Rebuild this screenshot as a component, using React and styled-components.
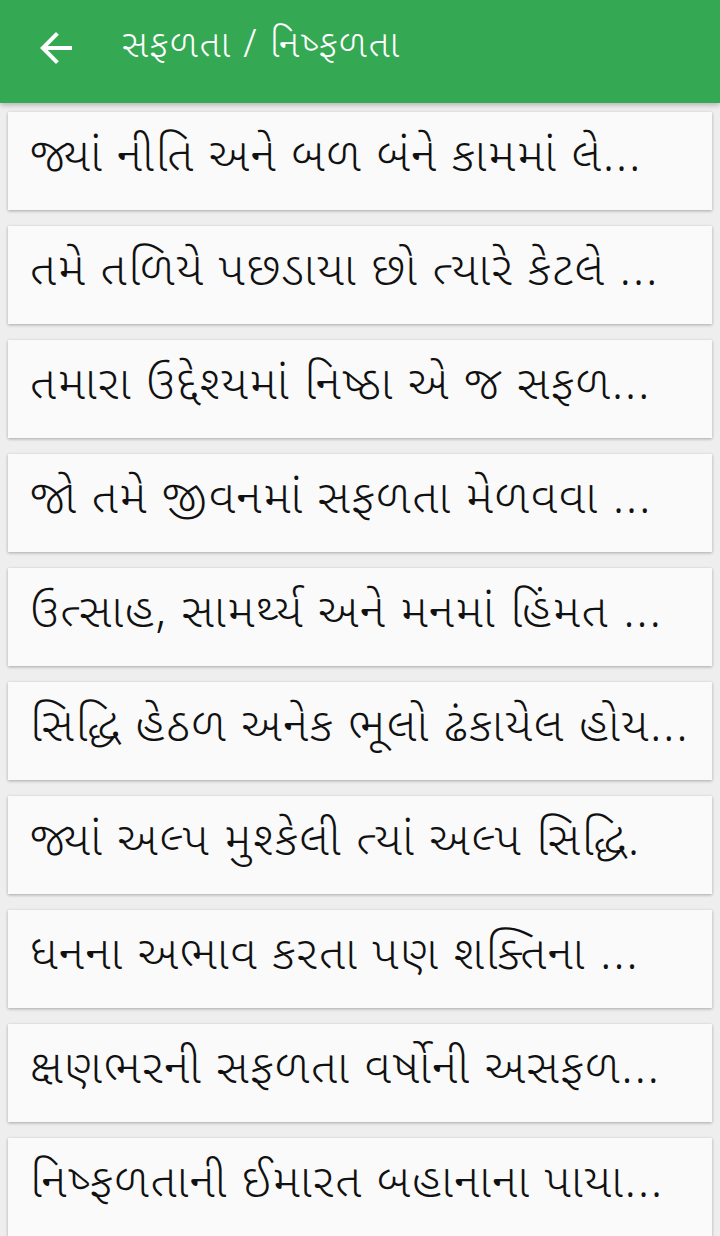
import React from 'react';
import styled, { createGlobalStyle } from 'styled-components';

const GlobalStyle = createGlobalStyle`
  html, body {
    margin: 0;
    padding: 0;
    background: #eeeeee;
    font-family: "Noto Sans Gujarati", "Noto Sans", Roboto, sans-serif;
  }
`;

const Page = styled.div`
  width: 720px;
  height: 1236px;
  overflow: hidden;
  background: #eeeeee;
`;

const Toolbar = styled.header`
  position: relative;
  z-index: 1;
  display: flex;
  align-items: center;
  height: 103px;
  padding-bottom: 8px;
  box-sizing: border-box;
  background: #35a853;
  color: #ffffff;
  box-shadow: 0 2px 5px rgba(0, 0, 0, 0.25);
`;

const BackButton = styled.button`
  display: flex;
  align-items: center;
  justify-content: center;
  width: 48px;
  height: 48px;
  margin-left: 32px;
  padding: 0;
  border: none;
  background: none;
  color: inherit;
`;

const Title = styled.h1`
  margin: 0 0 0 42px;
  font-size: 38px;
  font-weight: 300;
  letter-spacing: 1.7px;
`;

const List = styled.ul`
  list-style: none;
  margin: 0;
  padding: 9px 8px 0;
  display: flex;
  flex-direction: column;
  gap: 16px;
`;

const Card = styled.li`
  display: flex;
  align-items: center;
  height: 98px;
  padding: 0 22px 3px;
  box-sizing: border-box;
  background: #fafafa;
  box-shadow: 0 1px 3px rgba(0, 0, 0, 0.3);
  font-size: 47px;
  font-weight: 300;
  letter-spacing: 1.7px;
  color: #111111;
  white-space: nowrap;
  overflow: hidden;
`;

const quotes = [
  'જ્યાં નીતિ અને બળ બંને કામમાં લે...',
  'તમે તળિયે પછડાયા છો ત્યારે કેટલે ...',
  'તમારા ઉદ્દેશ્યમાં નિષ્ઠા એ જ સફળ...',
  'જો તમે જીવનમાં સફળતા મેળવવા ...',
  'ઉત્સાહ, સામર્થ્ય અને મનમાં હિંમત ...',
  'સિદ્ધિ હેઠળ અનેક ભૂલો ઢંકાયેલ હોય...',
  'જ્યાં અલ્પ મુશ્કેલી ત્યાં અલ્પ સિદ્ધિ.',
  'ધનના અભાવ કરતા પણ શક્તિના ...',
  'ક્ષણભરની સફળતા વર્ષોની અસફળ...',
  'નિષ્ફળતાની ઈમારત બહાનાના પાયા...',
];

export default function App() {
  return (
    <Page>
      <GlobalStyle />
      <Toolbar>
        <BackButton aria-label="back">
          <svg width="48" height="48" viewBox="0 0 24 24" fill="currentColor">
            <path d="M20 11H7.83l5.59-5.59L12 4l-8 8 8 8 1.41-1.41L7.83 13H20v-2z" />
          </svg>
        </BackButton>
        <Title>સફળતા / નિષ્ફળતા</Title>
      </Toolbar>
      <List>
        {quotes.map((q) => (
          <Card key={q}>{q}</Card>
        ))}
      </List>
    </Page>
  );
}
